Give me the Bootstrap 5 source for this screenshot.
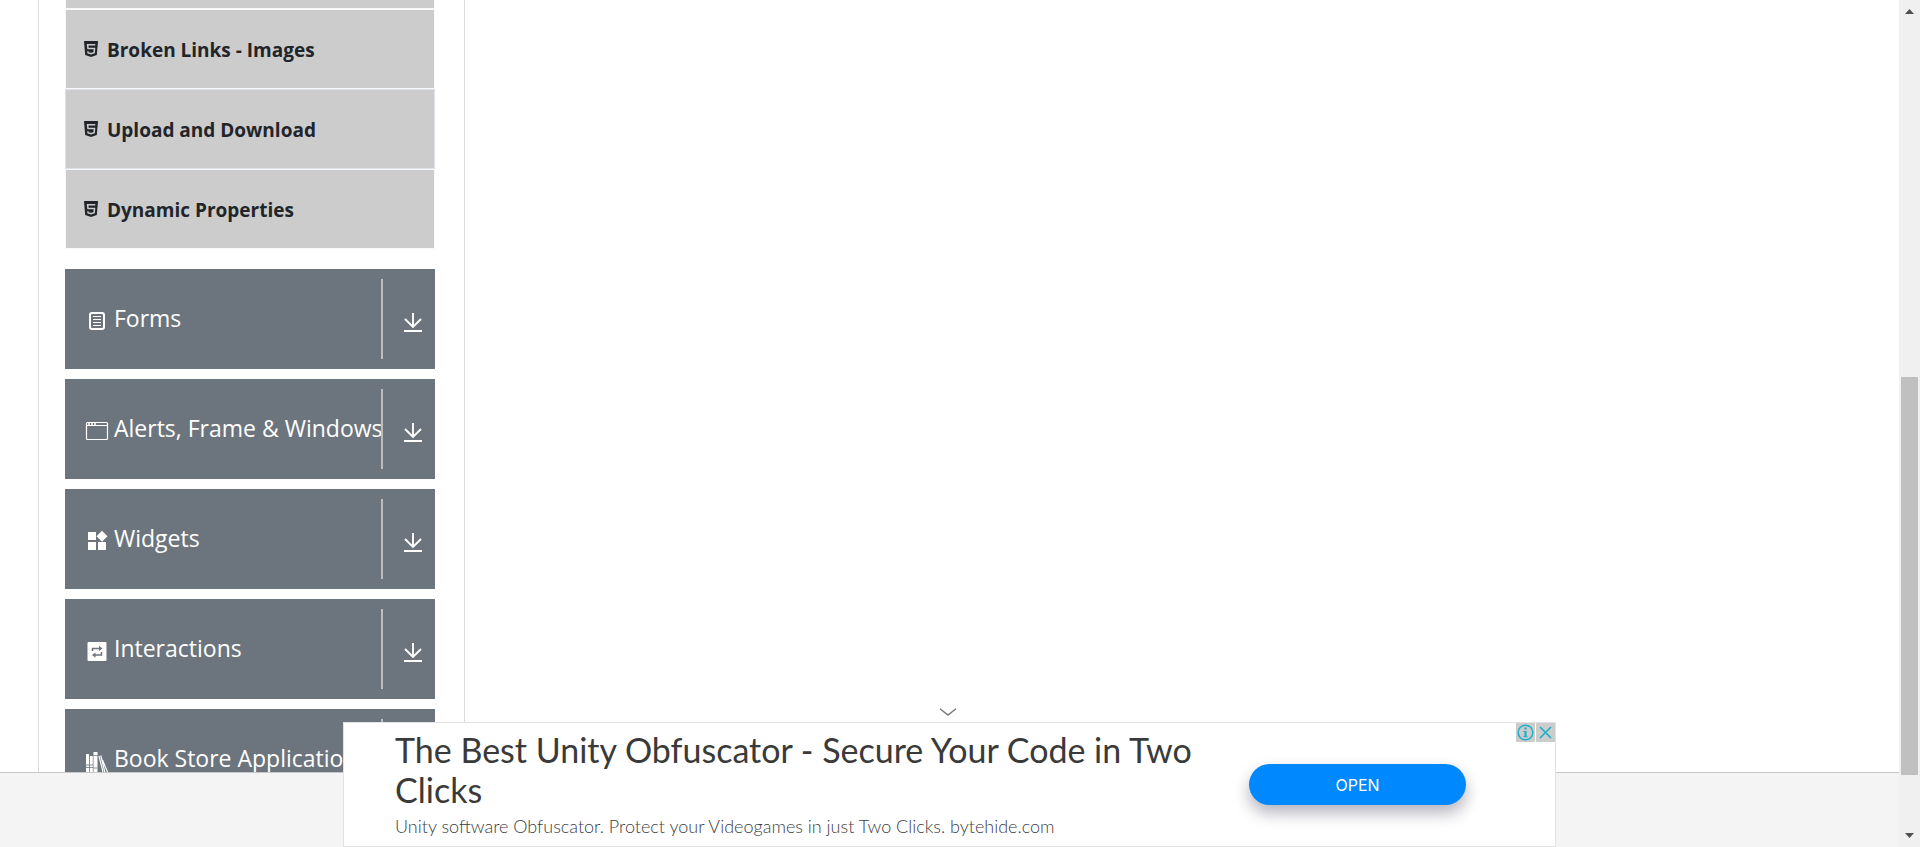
<!DOCTYPE html>
<html lang="en">
<head>
<meta charset="utf-8">
<meta name="viewport" content="width=device-width, initial-scale=1">
<title>Elements</title>
<link href="https://cdn.jsdelivr.net/npm/bootstrap@5.3.0/dist/css/bootstrap.min.css" rel="stylesheet">
<style>
  body { font-family: "Open Sans", "Noto Sans", sans-serif; color: #212529; }
  .main-area { min-height: 0; }
  .side-panel { width: 427px; margin-left: 2%; padding: 0 29px 0 26px; border: solid #dcdcdc; border-width: 0 1px; }
  .menu-item { height: 80px; padding: 0 18px; background: #ccc; border: 1px solid #f8f9fa; font-size: 19px; font-weight: 700; gap: 9px; }
  .menu-item.cut { height: 9px; border-top: 0; }
  .menu-item.active-row { border-color: #dee2e6; }
  .menu-item a { color: inherit; padding-top: 2px; }
  .group-list { gap: 10px; padding-top: 20px; }
  .group-btn { height: 100px; padding: 10px 13px 10px 20px; border: 0; background: #6c757d; color: #fff; font-size: 23px; line-height: 32px; }
  .group-icon { width: 24px; height: 24px; margin: 4px 5px 0 0; }
  .group-name { min-width: 0; padding-bottom: 2px; }
  .group-end { border-left: 2px solid #bdbdbd; padding: 8px 0 0 21px; }
  .page-foot { height: 75px; background: #f4f4f4; border-top: 1px solid #c8c8c8; }
  .scroll-track { width: 21px; background: #f0f0f0; padding: 9px 2px; }
  .scroll-thumb { width: 17px; height: 48%; background: #c0c0c0; margin-bottom: 58px; }
  .ad-wrap { bottom: 0; left: 0; right: 0; z-index: 5; }
  .ad-chevron { margin: 0 4px 6px 0; }
  .ad-box { width: 100%; max-width: 1213px; height: 125px; background: #fff; border: 1px solid #e2e2e2; padding: 7px 89px 0 51px; }
  .ad-title { font-family: Lato, sans-serif; font-size: 34px; line-height: 40px; color: #3a3a3a; }
  .ad-sub { font-family: Lato, sans-serif; font-size: 18px; line-height: 24px; font-weight: 300; color: #3c4043; padding-top: 4px; }
  .ad-text { width: 850px; }
  .ad-open { width: 217px; height: 41px; background: #08f; color: #fff; font-family: Inter, sans-serif; font-size: 16px; border: 0; box-shadow: 0 8px 16px rgba(20,20,50,.32); margin-top: 34px; }
  .ad-marks { top: 0; right: 0; gap: 1px; }
  .ad-marks button { width: 19px; height: 19px; background: #ccc; border: 0; }
</style>
<script src="https://cdn.jsdelivr.net/npm/bootstrap@5.3.0/dist/js/bootstrap.bundle.min.js"></script>
</head>
<body>
<svg class="d-none" aria-hidden="true">
  <symbol id="i-html" viewBox="0 0 14 16"><path fill="#212529" d="M0 0h14l-1.200 14L7 16l-5.800-2z"/><path fill="none" stroke="#ccc" stroke-width="1.500" d="M11.300 3.800H3.600l.4 3.700h6.500l-.4 4.200L7 12.700l-3-1-.1-1.500"/></symbol>
  <symbol id="i-down" viewBox="0 0 18 20"><path fill="none" stroke="#fff" stroke-width="1.900" d="M9 0v14.500M1 6l8 8 8-8M0 18h18"/></symbol>
</svg>
<div class="d-flex vh-100 overflow-hidden position-relative">
  <div class="d-flex flex-column flex-grow-1 position-relative">
    <main class="main-area d-flex flex-grow-1 overflow-hidden">
      <nav class="side-panel flex-shrink-0">
        <ul class="list-unstyled mb-0">
          <li class="menu-item cut"></li>
          <li class="menu-item d-flex align-items-center"><svg width="14" height="16"><use href="#i-html"/></svg><a href="#" class="text-decoration-none">Broken Links - Images</a></li>
          <li class="menu-item active-row d-flex align-items-center"><svg width="14" height="16"><use href="#i-html"/></svg><a href="#" class="text-decoration-none">Upload and Download</a></li>
          <li class="menu-item d-flex align-items-center"><svg width="14" height="16"><use href="#i-html"/></svg><a href="#" class="text-decoration-none">Dynamic Properties</a></li>
        </ul>
        <div class="group-list d-flex flex-column">
          <button class="group-btn d-flex align-items-center text-start text-nowrap">
            <svg class="group-icon flex-shrink-0" viewBox="0 0 24 24"><rect x="5" y="4" width="14" height="16" rx="2" fill="none" stroke="#fff" stroke-width="2"/><path stroke="#fff" stroke-width="1" d="M8 7.500h8M8 10.500h8M8 13.500h8M8 16.500h8"/></svg>
            <span class="group-name flex-grow-1">Forms</span>
            <span class="group-end h-100 d-flex align-items-center"><svg width="18" height="20"><use href="#i-down"/></svg></span>
          </button>
          <button class="group-btn d-flex align-items-center text-start text-nowrap">
            <svg class="group-icon flex-shrink-0" viewBox="0 0 24 24"><rect x="1.500" y="3.500" width="21" height="17" rx="1" fill="none" stroke="#fff" stroke-width="1.200"/><path stroke="#fff" stroke-width="1" d="M2 6.500h20"/><path stroke="#fff" stroke-width="1.500" stroke-dasharray="2 1" d="M3 5h9"/></svg>
            <span class="group-name flex-grow-1">Alerts, Frame &amp; Windows</span>
            <span class="group-end h-100 d-flex align-items-center"><svg width="18" height="20"><use href="#i-down"/></svg></span>
          </button>
          <button class="group-btn d-flex align-items-center text-start text-nowrap">
            <svg class="group-icon flex-shrink-0" viewBox="0 0 24 24"><path fill="#fff" d="M3 3h8v8H3zM3 13h8v8H3zM13 13h8v8h-8zM17 1.700l5.500 5.500-5.500 5.500-5.500-5.500z"/></svg>
            <span class="group-name flex-grow-1">Widgets</span>
            <span class="group-end h-100 d-flex align-items-center"><svg width="18" height="20"><use href="#i-down"/></svg></span>
          </button>
          <button class="group-btn d-flex align-items-center text-start text-nowrap">
            <svg class="group-icon flex-shrink-0" viewBox="0 0 24 24"><rect x="2.500" y="3" width="19" height="19" rx="1" fill="#fff"/><path fill="none" stroke="#6c757d" stroke-width="1.500" d="M7.500 12V9.500h8M16.500 13v3h-8"/><path fill="#6c757d" d="M14 6.800l3.500 2.700-3.500 2.500zM10.500 13.500L7 16l3.500 2.700z"/></svg>
            <span class="group-name flex-grow-1">Interactions</span>
            <span class="group-end h-100 d-flex align-items-center"><svg width="18" height="20"><use href="#i-down"/></svg></span>
          </button>
          <button class="group-btn d-flex align-items-center text-start text-nowrap">
            <svg class="group-icon flex-shrink-0" viewBox="0 0 24 24"><path fill="#fff" d="M1 5h3v18H1zM4.800 7h3v16h-3zM8.500 3h4v20h-4z"/><path fill="none" stroke="#fff" stroke-width="1.200" d="M14 7l4 16M15.800 6.500l4 16.500M17.500 11l5 12"/><path stroke="#6c757d" stroke-width=".8" d="M1 16h7M1 18.500h7M8.500 6.500h4M8.500 19h4"/></svg>
            <span class="group-name flex-grow-1">Book Store Application</span>
            <span class="group-end h-100 d-flex align-items-center"><svg width="18" height="20"><use href="#i-down"/></svg></span>
          </button>
        </div>
      </nav>
    </main>
    <footer class="page-foot flex-shrink-0"></footer>
    <aside class="ad-wrap position-absolute d-flex flex-column align-items-center">
      <svg class="ad-chevron" width="18" height="8" viewBox="0 0 18 8"><path fill="none" stroke="#777" stroke-width="1.400" d="M1 .7l8 6.300 8-6.300"/></svg>
      <div class="ad-box position-relative d-flex justify-content-between align-items-start">
        <div class="ad-text">
          <div class="ad-title">The Best Unity Obfuscator - Secure Your Code in Two Clicks</div>
          <div class="ad-sub">Unity software Obfuscator. Protect your Videogames in just Two Clicks. bytehide.com</div>
        </div>
        <button class="ad-open rounded-pill">OPEN</button>
        <div class="ad-marks position-absolute d-flex">
          <button class="p-0 d-flex" aria-label="Ad information"><svg width="19" height="19" viewBox="0 0 19 19"><circle cx="9.500" cy="9.500" r="7.300" fill="none" stroke="#1fb0c8" stroke-width="1.500"/><path stroke="#1fb0c8" stroke-width="2.200" d="M9.500 4.500v2M9.500 8v6"/><path stroke="#1fb0c8" d="M7.500 8.500h2M7.500 13.700h4"/></svg></button>
          <button class="p-0 d-flex" aria-label="Close ad"><svg width="19" height="19" viewBox="0 0 19 19"><path stroke="#1fb0c8" stroke-width="1.700" d="M4 4l11 11M15 4L4 15"/></svg></button>
        </div>
      </div>
    </aside>
  </div>
  <div class="scroll-track flex-shrink-0 d-flex flex-column align-items-center">
    <svg width="9" height="5" viewBox="0 0 9 5" class="mb-auto flex-shrink-0"><path fill="#505050" d="M0 5L4.500 0 9 5z"/></svg>
    <div class="scroll-thumb flex-shrink-0"></div>
    <svg width="9" height="5" viewBox="0 0 9 5" class="flex-shrink-0"><path fill="#505050" d="M0 0l4.500 5L9 0z"/></svg>
  </div>
</div>
</body>
</html>
